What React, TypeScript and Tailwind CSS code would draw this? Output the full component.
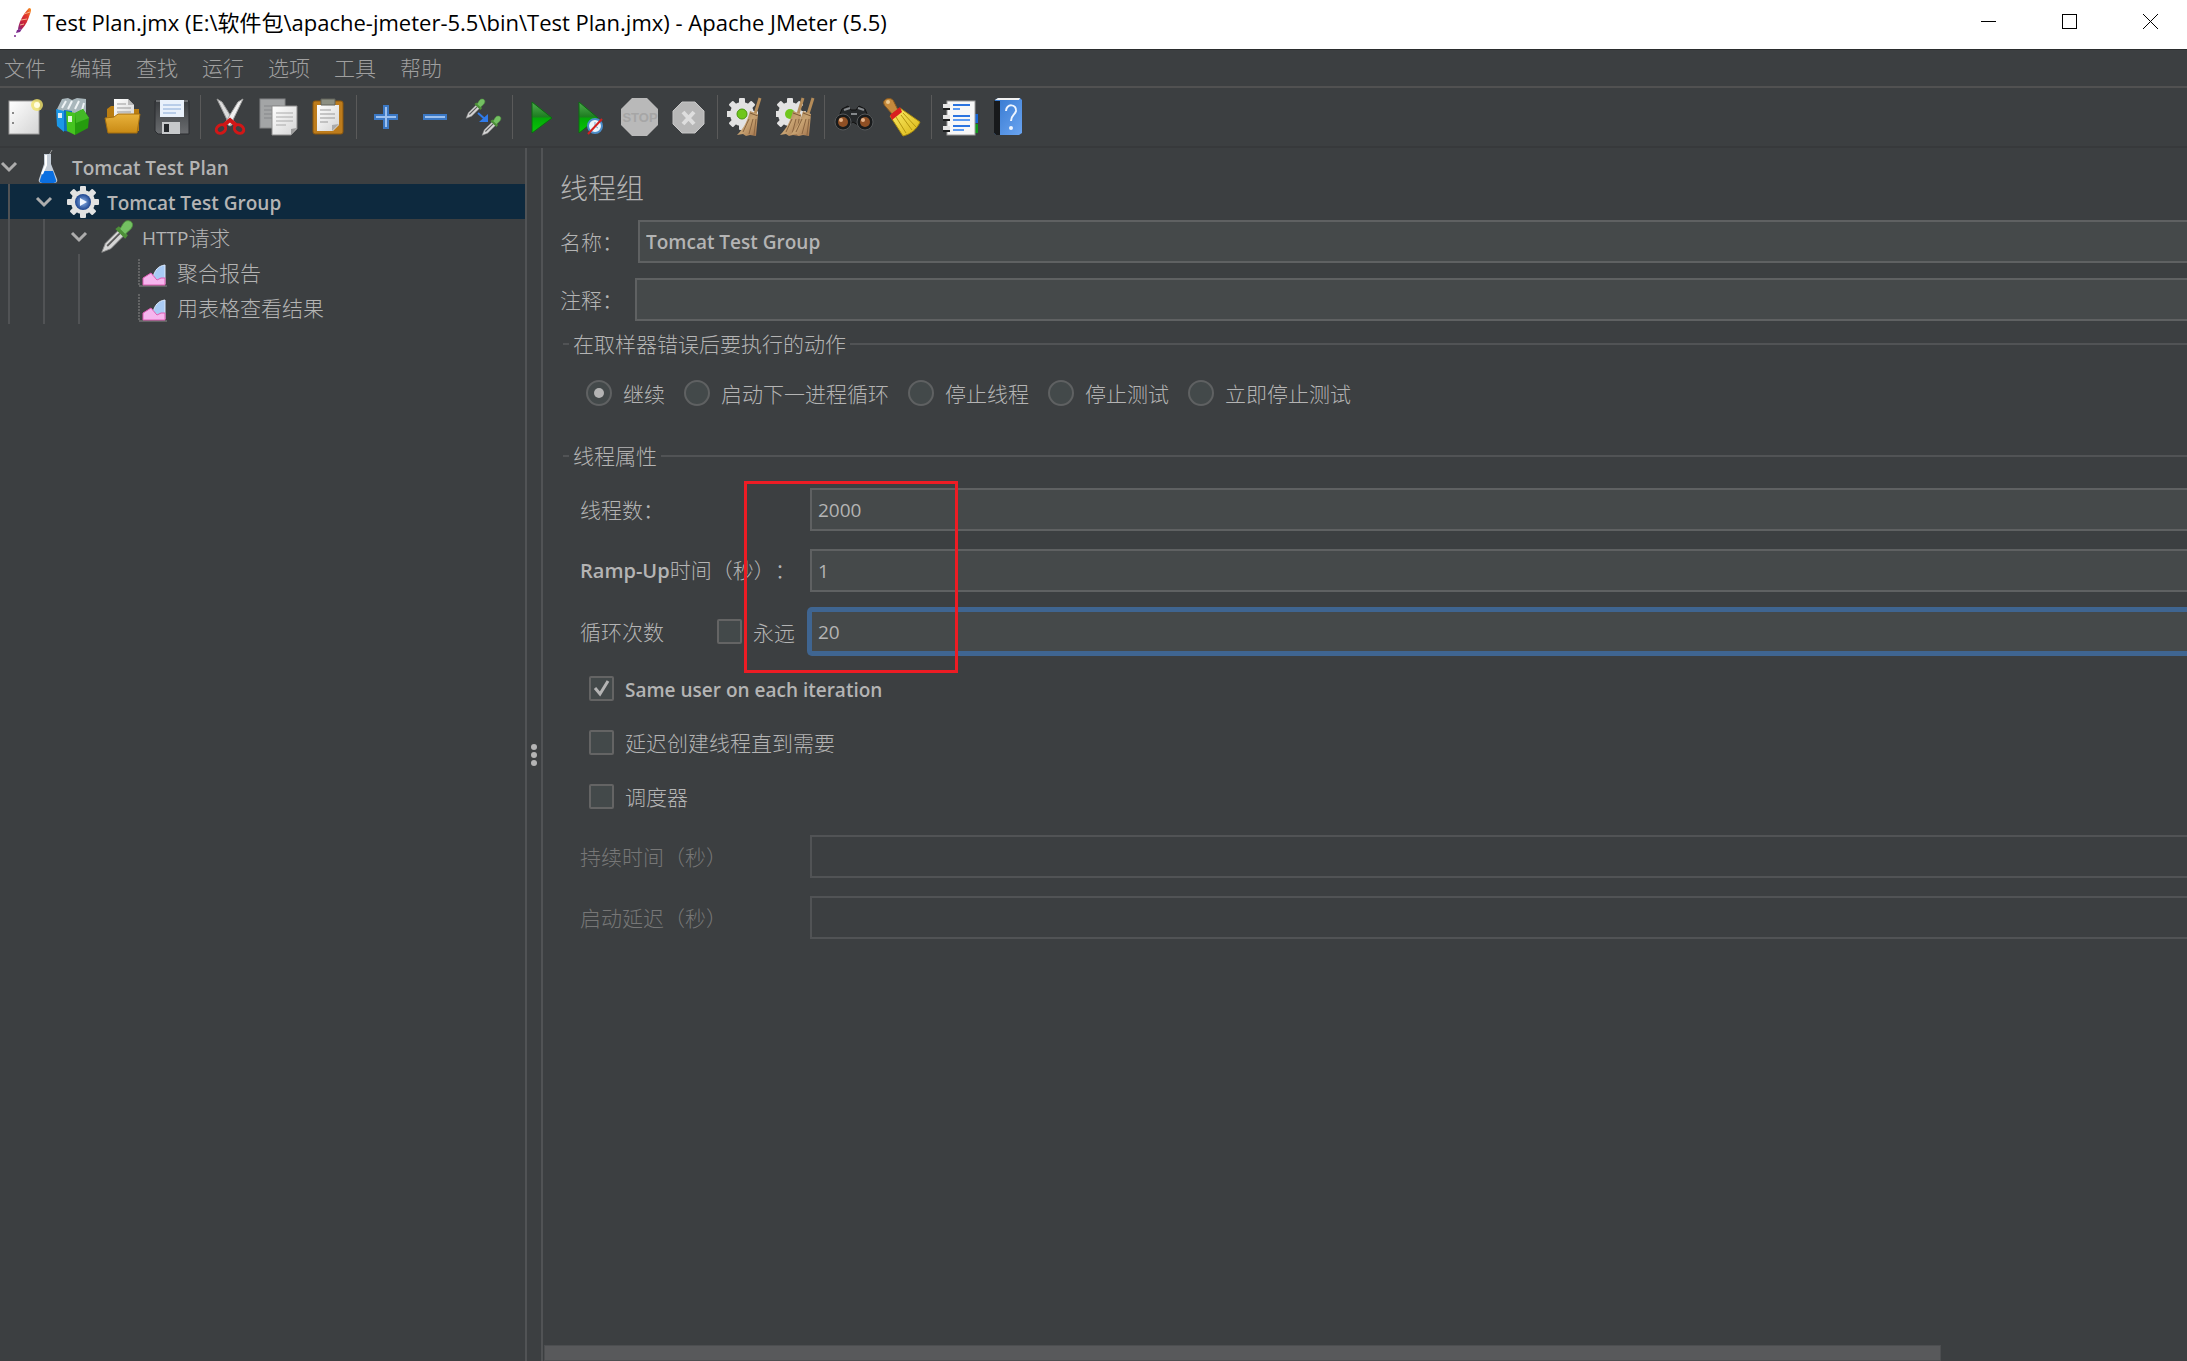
import { useState } from 'react'
import type { InputHTMLAttributes, ReactNode } from 'react'
import clsx from 'clsx'

const MENUS = ['文件', '编辑', '查找', '运行', '选项', '工具', '帮助']

const ON_ERROR = ['继续', '启动下一进程循环', '停止线程', '停止测试', '立即停止测试']

/* ---------- toolbar icons, all on a 40x40 grid ---------- */

function Icon({ children }: { children: ReactNode }) {
  return <svg viewBox="0 0 40 40" className="size-10 shrink-0" aria-hidden="true">{children}</svg>
}

function Gradients() {
  return (
    <svg className="absolute size-0" aria-hidden="true">
      <defs>
        <linearGradient id="paper" x1="0" y1="0" x2="1" y2="1"><stop offset="0" stopColor="#fff" /><stop offset="1" stopColor="#d4d4d4" /></linearGradient>
        <linearGradient id="green" x1="0" y1="0" x2="0" y2="1"><stop offset="0" stopColor="#4fae4f" /><stop offset=".48" stopColor="#1d7d20" /><stop offset=".52" stopColor="#04a808" /><stop offset="1" stopColor="#08c808" /></linearGradient>
        <linearGradient id="folder" x1="0" y1="0" x2="0" y2="1"><stop offset="0" stopColor="#e8b23c" /><stop offset="1" stopColor="#c98a14" /></linearGradient>
        <linearGradient id="straw" x1="0" y1="0" x2="1" y2="1"><stop offset="0" stopColor="#8d6b45" /><stop offset=".5" stopColor="#c9a473" /><stop offset="1" stopColor="#a0714a" /></linearGradient>
        <linearGradient id="yellow" x1="0" y1="0" x2="1" y2="1"><stop offset="0" stopColor="#fff06a" /><stop offset="1" stopColor="#d8b414" /></linearGradient>
        <linearGradient id="book" x1="0" y1="0" x2="1" y2="1"><stop offset="0" stopColor="#3477cf" /><stop offset="1" stopColor="#6aa4f0" /></linearGradient>
        <linearGradient id="disk" x1="0" y1="0" x2="0" y2="1"><stop offset="0" stopColor="#3a3d40" /><stop offset="1" stopColor="#6b6d70" /></linearGradient>
        <linearGradient id="feather" x1="1" y1="0" x2="0" y2="1"><stop offset="0" stopColor="#f7941d" /><stop offset=".35" stopColor="#e2372c" /><stop offset=".7" stopColor="#c0203f" /><stop offset="1" stopColor="#7b2a8c" /></linearGradient>
        <radialGradient id="orb"><stop offset="0" stopColor="#8fb4ea" /><stop offset="1" stopColor="#1e458f" /></radialGradient>
      </defs>
    </svg>
  )
}

function Dropper() {
  return (
    <>
      <path d="M2 37l4-10 14-14 6 6-14 14z" fill="#d6d6d6" stroke="#8e8e8e" strokeWidth="1" />
      <path d="M8 30l14-14" stroke="#5a5a5a" strokeWidth="2" />
      <path d="M17 11l4-3 10 10-3 4z" fill="#4d8f38" />
      <path d="M22 11c3-3 4-10 10-9 6 1 5 8 0 11l-4 4z" fill="#74c062" stroke="#4f9440" strokeWidth="1" />
    </>
  )
}

function Gear() {
  return (
    <g fill="#e2e2e2">
      <rect x="15" y="2" width="6" height="32" rx="1" />
      <rect x="15" y="2" width="6" height="32" rx="1" transform="rotate(45 18 18)" />
      <rect x="15" y="2" width="6" height="32" rx="1" transform="rotate(90 18 18)" />
      <rect x="15" y="2" width="6" height="32" rx="1" transform="rotate(135 18 18)" />
      <circle cx="18" cy="18" r="12" />
    </g>
  )
}

function Broom({ x = 0 }: { x?: number }) {
  return (
    <g transform={`translate(${x} 0)`}>
      <path d="M35 1l-5 16" stroke="#b58c59" strokeWidth="3" />
      <path d="M25 14l8 3-2 22-6-1-4 1-3-2-6 1c7-7 10-13 13-24z" fill="url(#straw)" />
      <path d="M24 22l-6 13M28 22l-4 15M31 22l-2 16" stroke="#8a6540" strokeWidth="1" />
      <path d="M25 16l8 3" stroke="#7d5a36" strokeWidth="1" />
    </g>
  )
}

const icons = {
  new: (
    <Icon>
      <rect x="4" y="4" width="30" height="33" fill="url(#paper)" stroke="#9c9c9c" />
      <circle cx="8" cy="16" r="1" fill="#666" /><circle cx="8" cy="26" r="1" fill="#666" />
      <circle cx="32" cy="8" r="6" fill="#f1e46a" opacity=".8" /><circle cx="32" cy="8" r="3" fill="#fffde0" />
    </Icon>
  ),
  templates: (
    <Icon>
      <path d="M3 12l5-10 6-1 4 2 5-2 9 1v16l-22 2z" fill="#a9b7bc" />
      <path d="M8 11l4-7M14 12l4-8M21 12l4-8M28 13l2-7" stroke="#eef3f5" strokeWidth="2" />
      <path d="M2 12l8 2v21l-7-6z" fill="#1c97e6" /><path d="M10 13l8 1v21l-8-1z" fill="#0d6fc0" />
      <path d="M12 14l9 2v22l-8-4z" fill="#45c41f" /><path d="M21 16l8-4 6 9-1 10-13 7z" fill="#259c0e" />
      <path d="M21 16l8-4 6 9-13 5z" fill="#43b826" />
      <rect x="4" y="16" width="4" height="5" fill="#d8ecfa" /><rect x="14" y="19" width="4" height="6" fill="#dff7da" />
    </Icon>
  ),
  open: (
    <Icon>
      <path d="M4 12l4-3h8l4 3h16v22H4z" fill="#b97d12" />
      <path d="M11 2h14l6 6v15H11z" fill="url(#paper)" /><path d="M25 2v6h6z" fill="#b9b9b9" />
      <path d="M14 7h9M14 11h14M14 15h14" stroke="#999" strokeWidth="1" />
      <path d="M2 21l9-1 4-3h22l-3 19H5z" fill="url(#folder)" stroke="#a56f0f" />
    </Icon>
  ),
  save: (
    <Icon>
      <path d="M3 4h34v33H6l-3-3z" fill="url(#disk)" stroke="#2a2d30" />
      <path d="M4 4h32" stroke="#a5a8aa" />
      <rect x="8" y="3" width="24" height="17" fill="#e9f1fb" /><path d="M11 8h18M11 12h18M11 16h13" stroke="#88a9d6" strokeWidth="1" />
      <rect x="10" y="25" width="18" height="12" fill="#c7c9cb" /><rect x="12" y="27" width="5" height="8" fill="#26292c" />
    </Icon>
  ),
  cut: (
    <Icon>
      <path d="M7 2l5 3 13 21-5 3z" fill="#dcdcdc" stroke="#9a9a9a" /><path d="M33 2l-5 3-13 21 5 3z" fill="#f0f0f0" stroke="#a5a5a5" />
      <ellipse cx="11" cy="32" rx="5" ry="4" fill="none" stroke="#d11717" strokeWidth="3" transform="rotate(-35 11 32)" />
      <ellipse cx="29" cy="32" rx="5" ry="4" fill="none" stroke="#d11717" strokeWidth="3" transform="rotate(35 29 32)" />
      <path d="M14 28l6-5 6 5" fill="none" stroke="#d11717" strokeWidth="4" />
    </Icon>
  ),
  copy: (
    <Icon>
      <rect x="1" y="2" width="25" height="29" fill="#a3a5a6" stroke="#848687" />
      <path d="M5 9h16M5 13h16M5 17h10M5 21h10" stroke="#85878a" />
      <path d="M13 9h25v23l-6 6H13z" fill="url(#paper)" stroke="#8c8c8c" />
      <path d="M17 16h17M17 20h17M17 24h17M17 28h10" stroke="#aaa" /><path d="M38 31l-6 7v-6z" fill="#9b9b9b" />
    </Icon>
  ),
  paste: (
    <Icon>
      <rect x="5" y="4" width="30" height="33" rx="2" fill="#bd7c1c" stroke="#8a560c" />
      <path d="M9 8h22v20l-6 6H9z" fill="url(#paper)" />
      <path d="M13 2h14v6H13z" fill="#8d9083" stroke="#60635a" />
      <path d="M12 13h11M12 17h15M12 21h15M12 25h8" stroke="#999" /><path d="M31 27l-7 7v-6z" fill="#aaa" />
    </Icon>
  ),
  plus: (
    <Icon><path d="M18 9h4v9h9v4h-9v9h-4v-9H9v-4h9z" fill="#9cc0ee" stroke="#3b78c4" strokeWidth="2" /></Icon>
  ),
  minus: (
    <Icon><rect x="9" y="18" width="22" height="4" fill="#9cc0ee" stroke="#3b78c4" strokeWidth="2" /></Icon>
  ),
  toggle: (
    <Icon>
      <g transform="translate(1 1) scale(.55)"><Dropper /></g>
      <g transform="translate(17 18) scale(.55)"><Dropper /></g>
      <path d="M14 16l8 7" stroke="#2f7bea" strokeWidth="2" /><path d="M24 17v8h-9z" fill="#2f7bea" />
    </Icon>
  ),
  start: (
    <Icon><path d="M10 5l20 16-20 15z" fill="url(#green)" stroke="#0b6d10" strokeWidth="1" /></Icon>
  ),
  startNoPause: (
    <Icon>
      <path d="M8 5l19 16L8 36z" fill="url(#green)" stroke="#0b6d10" strokeWidth="1" />
      <circle cx="24" cy="29" r="7" fill="#eaf3fb" stroke="#4b8dc9" strokeWidth="2" /><path d="M24 25v4l3 2" fill="none" stroke="#7aa5ce" strokeWidth="1" />
      <path d="M17 37l14-15" stroke="#d3201f" strokeWidth="2" />
    </Icon>
  ),
  stop: (
    <Icon>
      <path d="M12 1h15l11 11v16l-11 11H12L1 28V12z" fill="#b9b9b9" />
      <text x="20" y="25" textAnchor="middle" fontSize="13" fontWeight="700" fontFamily="Liberation Sans, sans-serif" fill="#a6a6a6">STOP</text>
    </Icon>
  ),
  shutdown: (
    <Icon>
      <path d="M13 5h13l9 9v13l-9 9H13l-9-9V14z" fill="#b7b7b7" stroke="#c6c6c6" />
      <path d="M14 15l11 12M25 15L14 27" stroke="#dedede" strokeWidth="4" />
    </Icon>
  ),
  clear: (
    <Icon><g transform="translate(-3 -1)"><Gear /></g><circle cx="15" cy="17" r="5" fill="#6fc61d" stroke="#4b9410" /><Broom x={-2} /></Icon>
  ),
  clearAll: (
    <Icon>
      <g transform="translate(-4 -1)"><Gear /></g><circle cx="14" cy="17" r="5" fill="#6fc61d" />
      <Broom x={-8} /><Broom x={2} />
    </Icon>
  ),
  search: (
    <Icon>
      <path d="M4 22L8 12l6-3 3 4h5l3-4 6 3 4 10-11 6-5-3-5 3z" fill="#25282a" stroke="#111" />
      <path d="M10 13l6-2M24 11l6 2M17 17h6" stroke="#85898c" strokeWidth="2" />
      <circle cx="9" cy="25" r="8" fill="#191b1c" stroke="#55585a" /><circle cx="31" cy="25" r="8" fill="#191b1c" stroke="#55585a" />
      <circle cx="9" cy="25" r="5" fill="#8f4f24" /><circle cx="31" cy="25" r="5" fill="#8f4f24" />
      <circle cx="7" cy="23" r="2" fill="#e7b58c" /><circle cx="29" cy="23" r="2" fill="#e7b58c" />
    </Icon>
  ),
  reset: (
    <Icon>
      <path d="M1 4c3-4 9-3 10 1l4 8-6 4-6-7C1 8 0 6 1 4z" fill="#c68a3c" stroke="#8a5a1e" /><circle cx="5" cy="5" r="2" fill="#ecc98f" />
      <path d="M7 19l10-8 20 14c-3 7-9 12-17 14z" fill="url(#yellow)" stroke="#a98a0e" />
      <path d="M13 20l10 16M18 18l11 15M20 16l13 14" stroke="#b5960f" strokeWidth="1" />
      <path d="M7 18l10-8 2 5-10 8z" fill="#d92020" />
    </Icon>
  ),
  functions: (
    <Icon>
      <path d="M33 17h4v9h-4z" fill="#1767d6" /><path d="M33 27h4v9h-4z" fill="#119a1b" />
      <rect x="6" y="4" width="28" height="34" fill="#f7f7f7" stroke="#9c9c9c" />
      <path d="M12 8h17M12 19h17M12 29h17" stroke="#2b74e0" strokeWidth="2" /><path d="M12 12h7M12 23h17M12 33h11" stroke="#5c9bf2" strokeWidth="2" />
      <path d="M2 9h7M2 20h7M2 31h7" stroke="#e5e5e5" strokeWidth="4" /><path d="M2 12h7M2 23h7M2 34h7" stroke="#1b1d1e" strokeWidth="2" />
    </Icon>
  ),
  help: (
    <Icon>
      <path d="M5 3l3-2h22l2 2v33l-3 2H6l-2-2z" fill="url(#book)" />
      <path d="M5 3l3-2h22l-1 2z" fill="#f1f1f1" /><path d="M4 4h6v34H6l-2-2z" fill="#17191b" />
      <path d="M16 14c0-8 11-7 10 0-1 4-5 4-5 10" fill="none" stroke="#eef5ff" strokeWidth="2" /><circle cx="21" cy="31" r="2" fill="#eef5ff" />
    </Icon>
  ),
}

const TOOLBAR: { name: keyof typeof icons; label: string }[][] = [
  [{ name: 'new', label: '新建' }, { name: 'templates', label: '模板' }, { name: 'open', label: '打开' }, { name: 'save', label: '保存' }],
  [{ name: 'cut', label: '剪切' }, { name: 'copy', label: '复制' }, { name: 'paste', label: '粘贴' }],
  [{ name: 'plus', label: '展开' }, { name: 'minus', label: '折叠' }, { name: 'toggle', label: '切换' }],
  [{ name: 'start', label: '启动' }, { name: 'startNoPause', label: '不停顿开始' }, { name: 'stop', label: '停止' }, { name: 'shutdown', label: '关闭' }],
  [{ name: 'clear', label: '清除' }, { name: 'clearAll', label: '清除全部' }],
  [{ name: 'search', label: '查找' }, { name: 'reset', label: '重置' }],
  [{ name: 'functions', label: '函数助手' }, { name: 'help', label: '帮助' }],
]

/* ---------- tree ---------- */

const flask = (
  <svg viewBox="0 0 36 36" className="size-9">
    <path d="M19 6l3-5" stroke="#999" strokeWidth="1" />
    <path d="M14 5h7v10l6 15c1 3-1 4-3 4H12c-2 0-4-1-3-4l5-15z" fill="#c3ccd6" />
    <path d="M13 22h10l3 9c1 2-1 3-3 3H13c-2 0-4-1-3-3z" fill="#0b6fe0" />
    <path d="M16 6v10l-4 9" fill="none" stroke="#fff" strokeWidth="2" />
  </svg>
)

const threadGroup = (
  <svg viewBox="0 0 36 36" className="size-9">
    <Gear />
    <circle cx="18" cy="18" r="8" fill="url(#orb)" />
    <path d="M15 14l7 4-7 4z" fill="#f0f5ff" />
  </svg>
)

const sampler = <svg viewBox="0 0 40 40" className="size-9"><Dropper /></svg>

const chart = (
  <svg viewBox="0 0 36 36" className="size-9">
    <path d="M4 5v27" stroke="#8a8a8a" strokeWidth="1" strokeDasharray="2 1" /><path d="M4 32h28" stroke="#8a8a8a" strokeWidth="1" />
    <path d="M18 23c2-7 5-11 12-12v19z" fill="#a9cbf5" stroke="#dcebff" strokeWidth="1" />
    <path d="M8 31v-7l8-5 6 7 4-2 4 0v7z" fill="#f6b5ee" stroke="#e05cb4" strokeWidth="1" />
  </svg>
)

const TREE = [
  { label: 'Tomcat Test Plan', icon: flask, depth: 0, open: true },
  { label: 'Tomcat Test Group', icon: threadGroup, depth: 1, open: true },
  { latin: 'HTTP', label: '请求', icon: sampler, depth: 2, open: true },
  { label: '聚合报告', icon: chart, depth: 3 },
  { label: '用表格查看结果', icon: chart, depth: 3 },
]

function Tree() {
  const [selected, setSelected] = useState(1)

  return (
    <nav className="w-[525px] shrink-0 pt-px">
      <ul>
        {TREE.map((node, i) => (
          <li key={node.label}>
            <button
              onClick={() => setSelected(i)}
              className={clsx('flex h-[35px] w-full items-center text-left', selected === i && 'bg-[#0d293e]')}
            >
              {Array.from({ length: node.depth }, (_, d) => (
                <span key={d} className="flex h-full w-[35px] shrink-0 pl-2">
                  <span className="w-0.5 bg-[#515355]" />
                </span>
              ))}
              {node.open && (
                <svg viewBox="0 0 18 18" className="size-[18px] shrink-0">
                  <path d="M2 5l7 7 7-7" fill="none" stroke="#adadad" strokeWidth="3" />
                </svg>
              )}
              <span className={clsx('flex w-9 shrink-0', node.open ? 'ml-3' : 'ml-[30px]')}>{node.icon}</span>
              {node.latin && <span className="pt-0.5 pl-1.5 text-[19px] font-medium">{node.latin}</span>}
              <span className={clsx('pt-0.5', !node.latin && 'pl-1.5', node.depth < 2 && 'text-[19px] font-semibold')}>
                {node.label}
              </span>
            </button>
          </li>
        ))}
      </ul>
    </nav>
  )
}

/* ---------- form parts ---------- */

function Field({ className, ...props }: InputHTMLAttributes<HTMLInputElement>) {
  return (
    <input
      type="text"
      className={clsx(
        'h-[43px] min-w-0 flex-1 border-2 border-r-0 border-[#5f6162] bg-[#45494a] px-1.5 text-[19px] outline-none disabled:border-[#515355] disabled:bg-transparent',
        className
      )}
      {...props}
    />
  )
}

function Check({ label, defaultChecked }: { label: ReactNode; defaultChecked?: boolean }) {
  return (
    <label className="flex h-[26px] items-center gap-[11px]">
      <span className="relative flex size-[25px]">
        <input
          type="checkbox"
          defaultChecked={defaultChecked}
          className="peer size-[25px] appearance-none rounded-xs border-2 border-[#646464] bg-[#43494a]"
        />
        <svg viewBox="0 0 25 25" className="pointer-events-none absolute inset-0 hidden peer-checked:block">
          <path d="M6 12l5 6 8-13" fill="none" stroke="#b4b4b4" strokeWidth="3" />
        </svg>
      </span>
      <span className="pt-0.5">{label}</span>
    </label>
  )
}

export default function App() {
  const [onError, setOnError] = useState(ON_ERROR[0])

  return (
    <div className="flex h-screen flex-col overflow-hidden bg-[#3c3f41] font-['Open_Sans','Noto_Sans_CJK_SC',sans-serif] text-[21px] leading-7 font-light text-[#b4b4b4] [text-spacing-trim:space-all]">
      <Gradients />

      {/* Window title bar */}
      <header className="flex h-[49px] shrink-0 bg-white text-black">
        <div className="flex h-[43px] flex-1 items-center">
          <svg viewBox="0 0 22 32" className="ml-3 h-8 w-[22px]" aria-hidden="true">
            <path d="M17 2c3 0 2 3 1 6-2 6-4 11-8 15l-4 1c0-6 5-16 11-22z" fill="url(#feather)" />
            <path d="M12 8l6-2M9 14l6-1M8 19l4-1" stroke="#f5b08a" strokeWidth="1" />
            <path d="M5 24l5-1-2 3-4 1z" fill="#7b2a8c" /><circle cx="3" cy="30" r="1" fill="#7b2a8c" />
          </svg>
          <h1 className="ml-[9px] text-[22px] font-normal">
            Test Plan.jmx (E:\软件包\apache-jmeter-5.5\bin\Test Plan.jmx) - Apache JMeter (5.5)
          </h1>
        </div>
        <div className="flex h-[43px] gap-2">
          <button aria-label="最小化" className="flex w-[73px] items-center justify-center">
            <svg viewBox="0 0 15 15" className="size-[15px]"><path d="M0 7.5h15" stroke="#000" /></svg>
          </button>
          <button aria-label="最大化" className="flex w-[73px] items-center justify-center">
            <svg viewBox="0 0 15 15" className="size-[15px]"><rect x=".5" y=".5" width="14" height="14" fill="none" stroke="#000" /></svg>
          </button>
          <button aria-label="关闭" className="flex w-[73px] items-center justify-center">
            <svg viewBox="0 0 15 15" className="size-[15px]"><path d="M0 0l15 15M15 0L0 15" stroke="#000" /></svg>
          </button>
        </div>
      </header>

      {/* Menu bar */}
      <nav className="flex h-[39px] shrink-0 items-center gap-6 border-t border-b-2 border-t-[#2b2d2e] border-b-[#515151] pl-1 text-[#a0a0a0]">
        {MENUS.map(menu => <button key={menu}>{menu}</button>)}
      </nav>

      {/* Toolbar */}
      <div className="flex h-[60px] shrink-0 items-center border-b-2 border-[#37393b]">
        {TOOLBAR.map((group, i) => (
          <div key={i} className="flex items-center">
            {i > 0 && <span className="mx-1 h-11 w-px bg-[#5a5a5a]" />}
            {group.map(({ name, label }) => (
              <button key={name} aria-label={label} className="flex w-[49px] justify-center">{icons[name]}</button>
            ))}
          </div>
        ))}
      </div>

      <div className="flex min-h-0 flex-1">
        <Tree />

        {/* Split pane handle */}
        <div className="flex w-[18px] shrink-0 flex-col items-center justify-center gap-0.5 border-x-2 border-[#515355]">
          <span className="size-1.5 rounded-full bg-[#b4b4b4]" />
          <span className="size-1.5 rounded-full bg-[#b4b4b4]" />
          <span className="size-1.5 rounded-full bg-[#b4b4b4]" />
        </div>

        <main className="flex min-w-0 flex-1 flex-col">
          <form className="flex-1 pt-[19px] pl-[17px]">
            <h2 className="text-[28px] leading-[42px]">线程组</h2>

            <div className="mt-[11px] flex items-center">
              <label htmlFor="name" className="w-[78px]">名称：</label>
              <Field id="name" defaultValue="Tomcat Test Group" className="font-semibold" />
            </div>
            <div className="mt-[15px] flex items-center">
              <label htmlFor="comments" className="w-[75px]">注释：</label>
              <Field id="comments" />
            </div>

            {/* Action after sampler error */}
            <fieldset className="mt-[9px] ml-[3px] border-t-2 border-[#515355]">
              <legend className="ml-1.5 px-1">在取样器错误后要执行的动作</legend>
              <div className="flex gap-[19px] pt-[22px] pl-[23px]">
                {ON_ERROR.map(option => (
                  <label key={option} className="flex h-[26px] items-center gap-[11px]">
                    <span className="relative flex size-[26px] items-center justify-center">
                      <input
                        type="radio"
                        name="on-error"
                        checked={onError === option}
                        onChange={() => setOnError(option)}
                        className="size-[26px] appearance-none rounded-full border-2 border-[#5f6162] bg-[#43494a]"
                      />
                      {onError === option && <span className="pointer-events-none absolute size-2.5 rounded-full bg-[#b4b4b4]" />}
                    </span>
                    <span className="pt-0.5">{option}</span>
                  </label>
                ))}
              </div>
            </fieldset>

            {/* Thread properties */}
            <fieldset className="mt-9 ml-[3px] border-t-2 border-[#515355]">
              <legend className="ml-1.5 px-1">线程属性</legend>
              <div className="relative flex flex-col gap-[18px] pt-[18px] pl-[17px]">
                <div className="flex items-center">
                  <label htmlFor="threads" className="w-[230px]">线程数：</label>
                  <Field id="threads" defaultValue="2000" className="font-normal" />
                </div>
                <div className="flex items-center">
                  <label htmlFor="ramp" className="w-[230px] whitespace-nowrap"><span className="text-[20px] font-semibold">Ramp-Up</span>时间（秒）：</label>
                  <Field id="ramp" defaultValue="1" className="font-normal" />
                </div>
                <div className="flex items-center">
                  <label htmlFor="loops" className="w-[137px]">循环次数</label>
                  <div className="w-[93px]"><Check label="永远" /></div>
                  <Field id="loops" defaultValue="20" className="rounded-l-xs border-[#3f6591]! font-normal ring-3 ring-[#3f6591]" />
                </div>
                <div className="pointer-events-none absolute top-[11px] left-[181px] h-48 w-[214px] border-3 border-[#ed1c24]" />
              </div>

              <div className="flex flex-col gap-7 pt-[22px] pl-[26px]">
                <Check label={<span className="text-[19px] font-semibold">Same user on each iteration</span>} defaultChecked />
                <Check label="延迟创建线程直到需要" />
                <Check label="调度器" />
              </div>

              <div className="flex flex-col gap-[18px] pt-[26px] pl-[17px]">
                <div className="flex items-center">
                  <label htmlFor="duration" className="w-[230px] text-[#777]">持续时间（秒）</label>
                  <Field id="duration" disabled />
                </div>
                <div className="flex items-center">
                  <label htmlFor="delay" className="w-[230px] text-[#777]">启动延迟（秒）</label>
                  <Field id="delay" disabled />
                </div>
              </div>
            </fieldset>
          </form>

          {/* Horizontal scrollbar */}
          <div className="flex h-4 shrink-0 pl-px">
            <div className="w-[85%] border border-[#4c4e50] bg-[#58595b]" />
          </div>
        </main>
      </div>
    </div>
  )
}
